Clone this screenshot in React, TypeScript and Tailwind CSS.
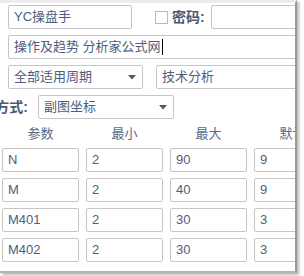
import type { ReactNode } from "react";

function Field({ className, children }: { className?: string; children?: ReactNode }) {
  return (
    <div
      className={
        "h-[24px] shrink-0 flex items-center px-[5px] border border-[#c6c6c6] rounded-[2px] bg-white text-[13px] text-[#4f5e7c] whitespace-nowrap overflow-hidden " +
        (className ?? "")
      }
    >
      {children}
    </div>
  );
}

function Caret() {
  return (
    <svg width="8" height="5" viewBox="0 0 8 5" className="ml-auto mr-[1px]">
      <path d="M0 0 L8 0 L4 4.5 Z" fill="#4d5a72" />
    </svg>
  );
}

const params = [
  { name: "N", min: "2", max: "90", def: "9" },
  { name: "M", min: "2", max: "40", def: "9" },
  { name: "M401", min: "2", max: "30", def: "3" },
  { name: "M402", min: "2", max: "30", def: "3" },
];

export default function App() {
  return (
    <div className="w-[304px] h-[276px] bg-white font-['Liberation_Sans','Noto_Sans_CJK_SC',sans-serif]">
      <div className="w-[297px] h-[273px] overflow-hidden border-t-[3px] border-t-[#ececec] border-r-[2px] border-r-[#9a9a9a] border-b-[2px] border-b-[#b4b4b4] shadow-[2px_2px_3px_rgba(0,0,0,0.3)]">
        <div className="w-[360px] flex flex-col gap-[6px] pt-[2px]">
          <div className="flex items-center pl-[8px]">
            <Field className="w-[124px]">YC操盘手</Field>
            <div className="ml-[23px] w-[13px] h-[13px] border border-[#b8b8b8] bg-white" />
            <span className="ml-[4px] text-[14px] font-bold text-[#4a5878]">密码:</span>
            <Field className="ml-[6px] w-[120px]" />
          </div>
          <div className="flex pl-[8px]">
            <Field className="w-[320px]">
              操作及趋势 分析家公式网
              <span className="inline-block w-[1px] h-[16px] bg-black ml-[1px]" />
            </Field>
          </div>
          <div className="flex pl-[8px]">
            <Field className="w-[135px]">
              全部适用周期
              <Caret />
            </Field>
            <Field className="ml-[13px] w-[180px]">技术分析</Field>
          </div>
          <div className="flex items-center">
            <div className="w-[28px] overflow-hidden flex justify-end">
              <span className="text-[14px] font-bold text-[#4a5878] whitespace-nowrap">显示方式:</span>
            </div>
            <Field className="ml-[10px] w-[136px]">
              副图坐标
              <Caret />
            </Field>
          </div>
        </div>
        <div className="w-[360px] pl-[2px] mt-[1px]">
          <div className="grid grid-cols-[77px_77px_77px_77px] gap-x-[7px] h-[28px] items-center text-center text-[13px] text-[#5a6986]">
            <span>参数</span>
            <span>最小</span>
            <span>最大</span>
            <span>默认</span>
          </div>
          <div className="flex flex-col gap-[6px]">
            {params.map((p) => (
              <div key={p.name} className="grid grid-cols-[77px_77px_77px_77px] gap-x-[7px]">
                <Field>{p.name}</Field>
                <Field>{p.min}</Field>
                <Field>{p.max}</Field>
                <Field>{p.def}</Field>
              </div>
            ))}
          </div>
        </div>
      </div>
    </div>
  );
}
